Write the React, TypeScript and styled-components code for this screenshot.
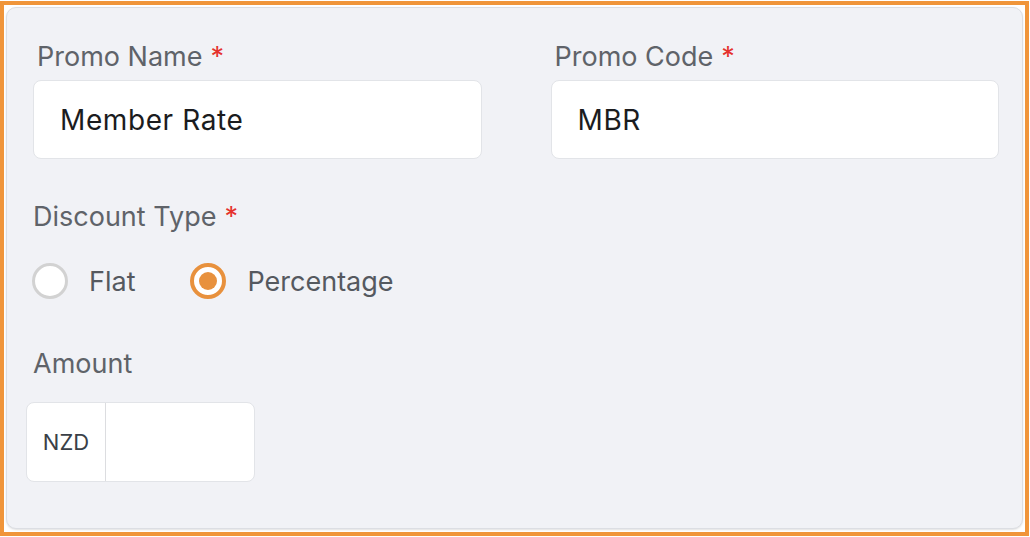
import * as React from "react";
import styled, { createGlobalStyle } from "styled-components";

const GlobalStyle = createGlobalStyle`
  html, body {
    margin: 0;
    padding: 0;
    background: #ffffff;
    font-family: Inter, "Noto Sans", "Liberation Sans", sans-serif;
  }
`;

const Frame = styled.div`
  box-sizing: border-box;
  width: 1029px;
  height: 535px;
  margin-top: 1px;
  border: 4px solid #f0953a;
  padding: 2px 2px 3px 2px;
  display: flex;
`;

const Card = styled.div`
  box-sizing: border-box;
  flex: 1;
  background: #f1f2f6;
  border: 1px solid #dcdee3;
  border-radius: 10px;
  box-shadow: 0 1px 2px rgba(0, 0, 0, 0.12);
  padding: 33px 23px 0 26px;
  display: flex;
  flex-direction: column;
`;

const Row = styled.div`
  display: grid;
  grid-template-columns: 1fr 1fr;
  column-gap: 69px;
`;

const Field = styled.div`
  display: flex;
  flex-direction: column;
`;

const Label = styled.div<{ $inset?: boolean; $gap?: number }>`
  font-size: 27px;
  line-height: 32px;
  color: #5f6369;
  padding-left: ${(p) => (p.$inset ? "4px" : "0")};
  margin-bottom: ${(p) => p.$gap ?? 7}px;
`;

const Req = styled.span`
  color: #e5322d;
  margin-left: 8px;
`;

const Input = styled.div`
  box-sizing: border-box;
  height: 79px;
  background: #ffffff;
  border: 1px solid #e2e4e8;
  border-radius: 8px;
  display: flex;
  align-items: center;
  padding-left: 26px;
  font-size: 28px;
  letter-spacing: 0.6px;
  color: #1b1c1e;
`;

const Section = styled.div<{ $top: number }>`
  margin-top: ${(p) => p.$top}px;
  display: flex;
  flex-direction: column;
`;

const RadioGroup = styled.div`
  display: flex;
  align-items: center;
  margin-top: 30px;
  margin-left: -1px;
`;

const RadioOption = styled.label`
  display: flex;
  align-items: center;
  gap: 21px;
  font-size: 27px;
  color: #55595f;
  & + & {
    margin-left: 55px;
  }
`;

const RadioDot = styled.span<{ $checked?: boolean }>`
  box-sizing: border-box;
  width: 36px;
  height: 36px;
  border-radius: 50%;
  background: #ffffff;
  border: ${(p) => (p.$checked ? "4px solid #e8913d" : "3px solid #d2d2d2")};
  display: flex;
  align-items: center;
  justify-content: center;
  &::after {
    content: "";
    display: ${(p) => (p.$checked ? "block" : "none")};
    width: 18px;
    height: 18px;
    border-radius: 50%;
    background: #e8913d;
  }
`;

const AmountBox = styled.div`
  box-sizing: border-box;
  width: 229px;
  height: 80px;
  margin-left: -7px;
  background: #ffffff;
  border: 1px solid #e2e4e8;
  border-radius: 8px;
  display: flex;
`;

const Prefix = styled.div`
  width: 78px;
  border-right: 1px solid #dcdde0;
  display: flex;
  align-items: center;
  justify-content: center;
  font-size: 22px;
  color: #3a3f47;
`;

const AmountField = styled.div`
  flex: 1;
`;

export default function App() {
  return (
    <>
      <GlobalStyle />
      <Frame>
        <Card>
          <Row>
            <Field>
              <Label $inset>
                Promo Name<Req>*</Req>
              </Label>
              <Input>Member Rate</Input>
            </Field>
            <Field>
              <Label $inset>
                Promo Code<Req>*</Req>
              </Label>
              <Input>MBR</Input>
            </Field>
          </Row>

          <Section $top={42}>
            <Label $gap={0}>
              Discount Type<Req>*</Req>
            </Label>
            <RadioGroup>
              <RadioOption>
                <RadioDot />
                Flat
              </RadioOption>
              <RadioOption>
                <RadioDot $checked />
                Percentage
              </RadioOption>
            </RadioGroup>
          </Section>

          <Section $top={49}>
            <Label $gap={22}>Amount</Label>
            <AmountBox>
              <Prefix>NZD</Prefix>
              <AmountField />
            </AmountBox>
          </Section>
        </Card>
      </Frame>
    </>
  );
}
